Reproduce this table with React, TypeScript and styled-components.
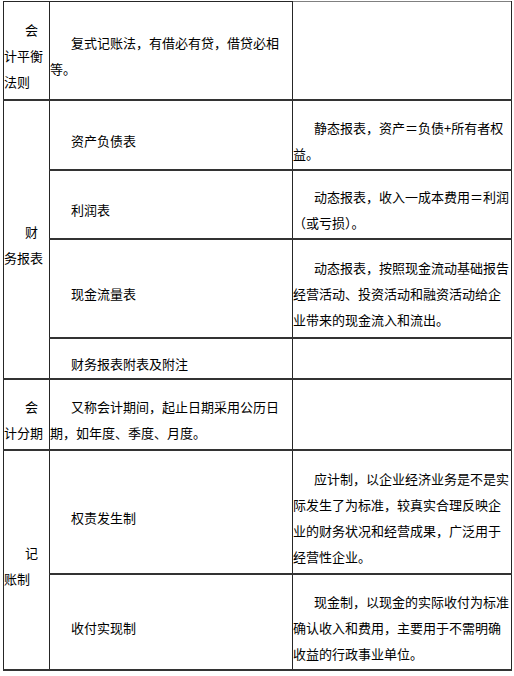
import React from "react";
import styled, { createGlobalStyle } from "styled-components";

const Global = createGlobalStyle`
  html, body { margin: 0; padding: 0; background: #ffffff; }
  body { font-family: "Noto Sans CJK SC", "Noto Sans", sans-serif; color: #000; }
`;

const Table = styled.table`
  margin: 1px 0 0 3px;
  width: 508px;
  table-layout: fixed;
  border-collapse: collapse;
  border-spacing: 0;
`;

const Row = styled.tr<{ $h: number }>`
  height: ${(p) => p.$h}px;
`;

const Cell = styled.td`
  border: 1px solid #262626;
  border-top: 2px solid #333333;
  border-bottom: 2px solid #333333;
  padding: 12px 0 0 0;
  vertical-align: middle;
  font-size: 13px;
  line-height: 26px;
  text-indent: 21px;
  text-align: left;
  word-break: break-all;
  color: #000;
`;

const TopCell = styled(Cell)<{ $light?: boolean }>`
  border-top: 1px solid ${(p) => (p.$light ? "#808080" : "#262626")};
`;

export default function App() {
  return (
    <>
      <Global />
      <Table>
        <colgroup>
          <col style={{ width: 46 }} />
          <col style={{ width: 243 }} />
          <col style={{ width: 219 }} />
        </colgroup>
        <tbody>
          <Row $h={98}>
            <TopCell>会计平衡法则</TopCell>
            <TopCell>复式记账法，有借必有贷，借贷必相等。</TopCell>
            <TopCell $light />
          </Row>
          <Row $h={70}>
            <Cell rowSpan={4}>财务报表</Cell>
            <Cell>资产负债表</Cell>
            <Cell>静态报表，资产＝负债+所有者权益。</Cell>
          </Row>
          <Row $h={69}>
            <Cell>利润表</Cell>
            <Cell>动态报表，收入一成本费用＝利润（或亏损）。</Cell>
          </Row>
          <Row $h={99}>
            <Cell>现金流量表</Cell>
            <Cell>动态报表，按照现金流动基础报告经营活动、投资活动和融资活动给企业带来的现金流入和流出。</Cell>
          </Row>
          <Row $h={41}>
            <Cell>财务报表附表及附注</Cell>
            <Cell />
          </Row>
          <Row $h={71}>
            <Cell>会计分期</Cell>
            <Cell>又称会计期间，起止日期采用公历日期，如年度、季度、月度。</Cell>
            <Cell />
          </Row>
          <Row $h={124}>
            <Cell rowSpan={2}>记账制</Cell>
            <Cell>权责发生制</Cell>
            <Cell>应计制，以企业经济业务是不是实际发生了为标准，较真实合理反映企业的财务状况和经营成果，广泛用于经营性企业。</Cell>
          </Row>
          <Row $h={96}>
            <Cell>收付实现制</Cell>
            <Cell>现金制，以现金的实际收付为标准确认收入和费用，主要用于不需明确收益的行政事业单位。</Cell>
          </Row>
        </tbody>
      </Table>
    </>
  );
}
